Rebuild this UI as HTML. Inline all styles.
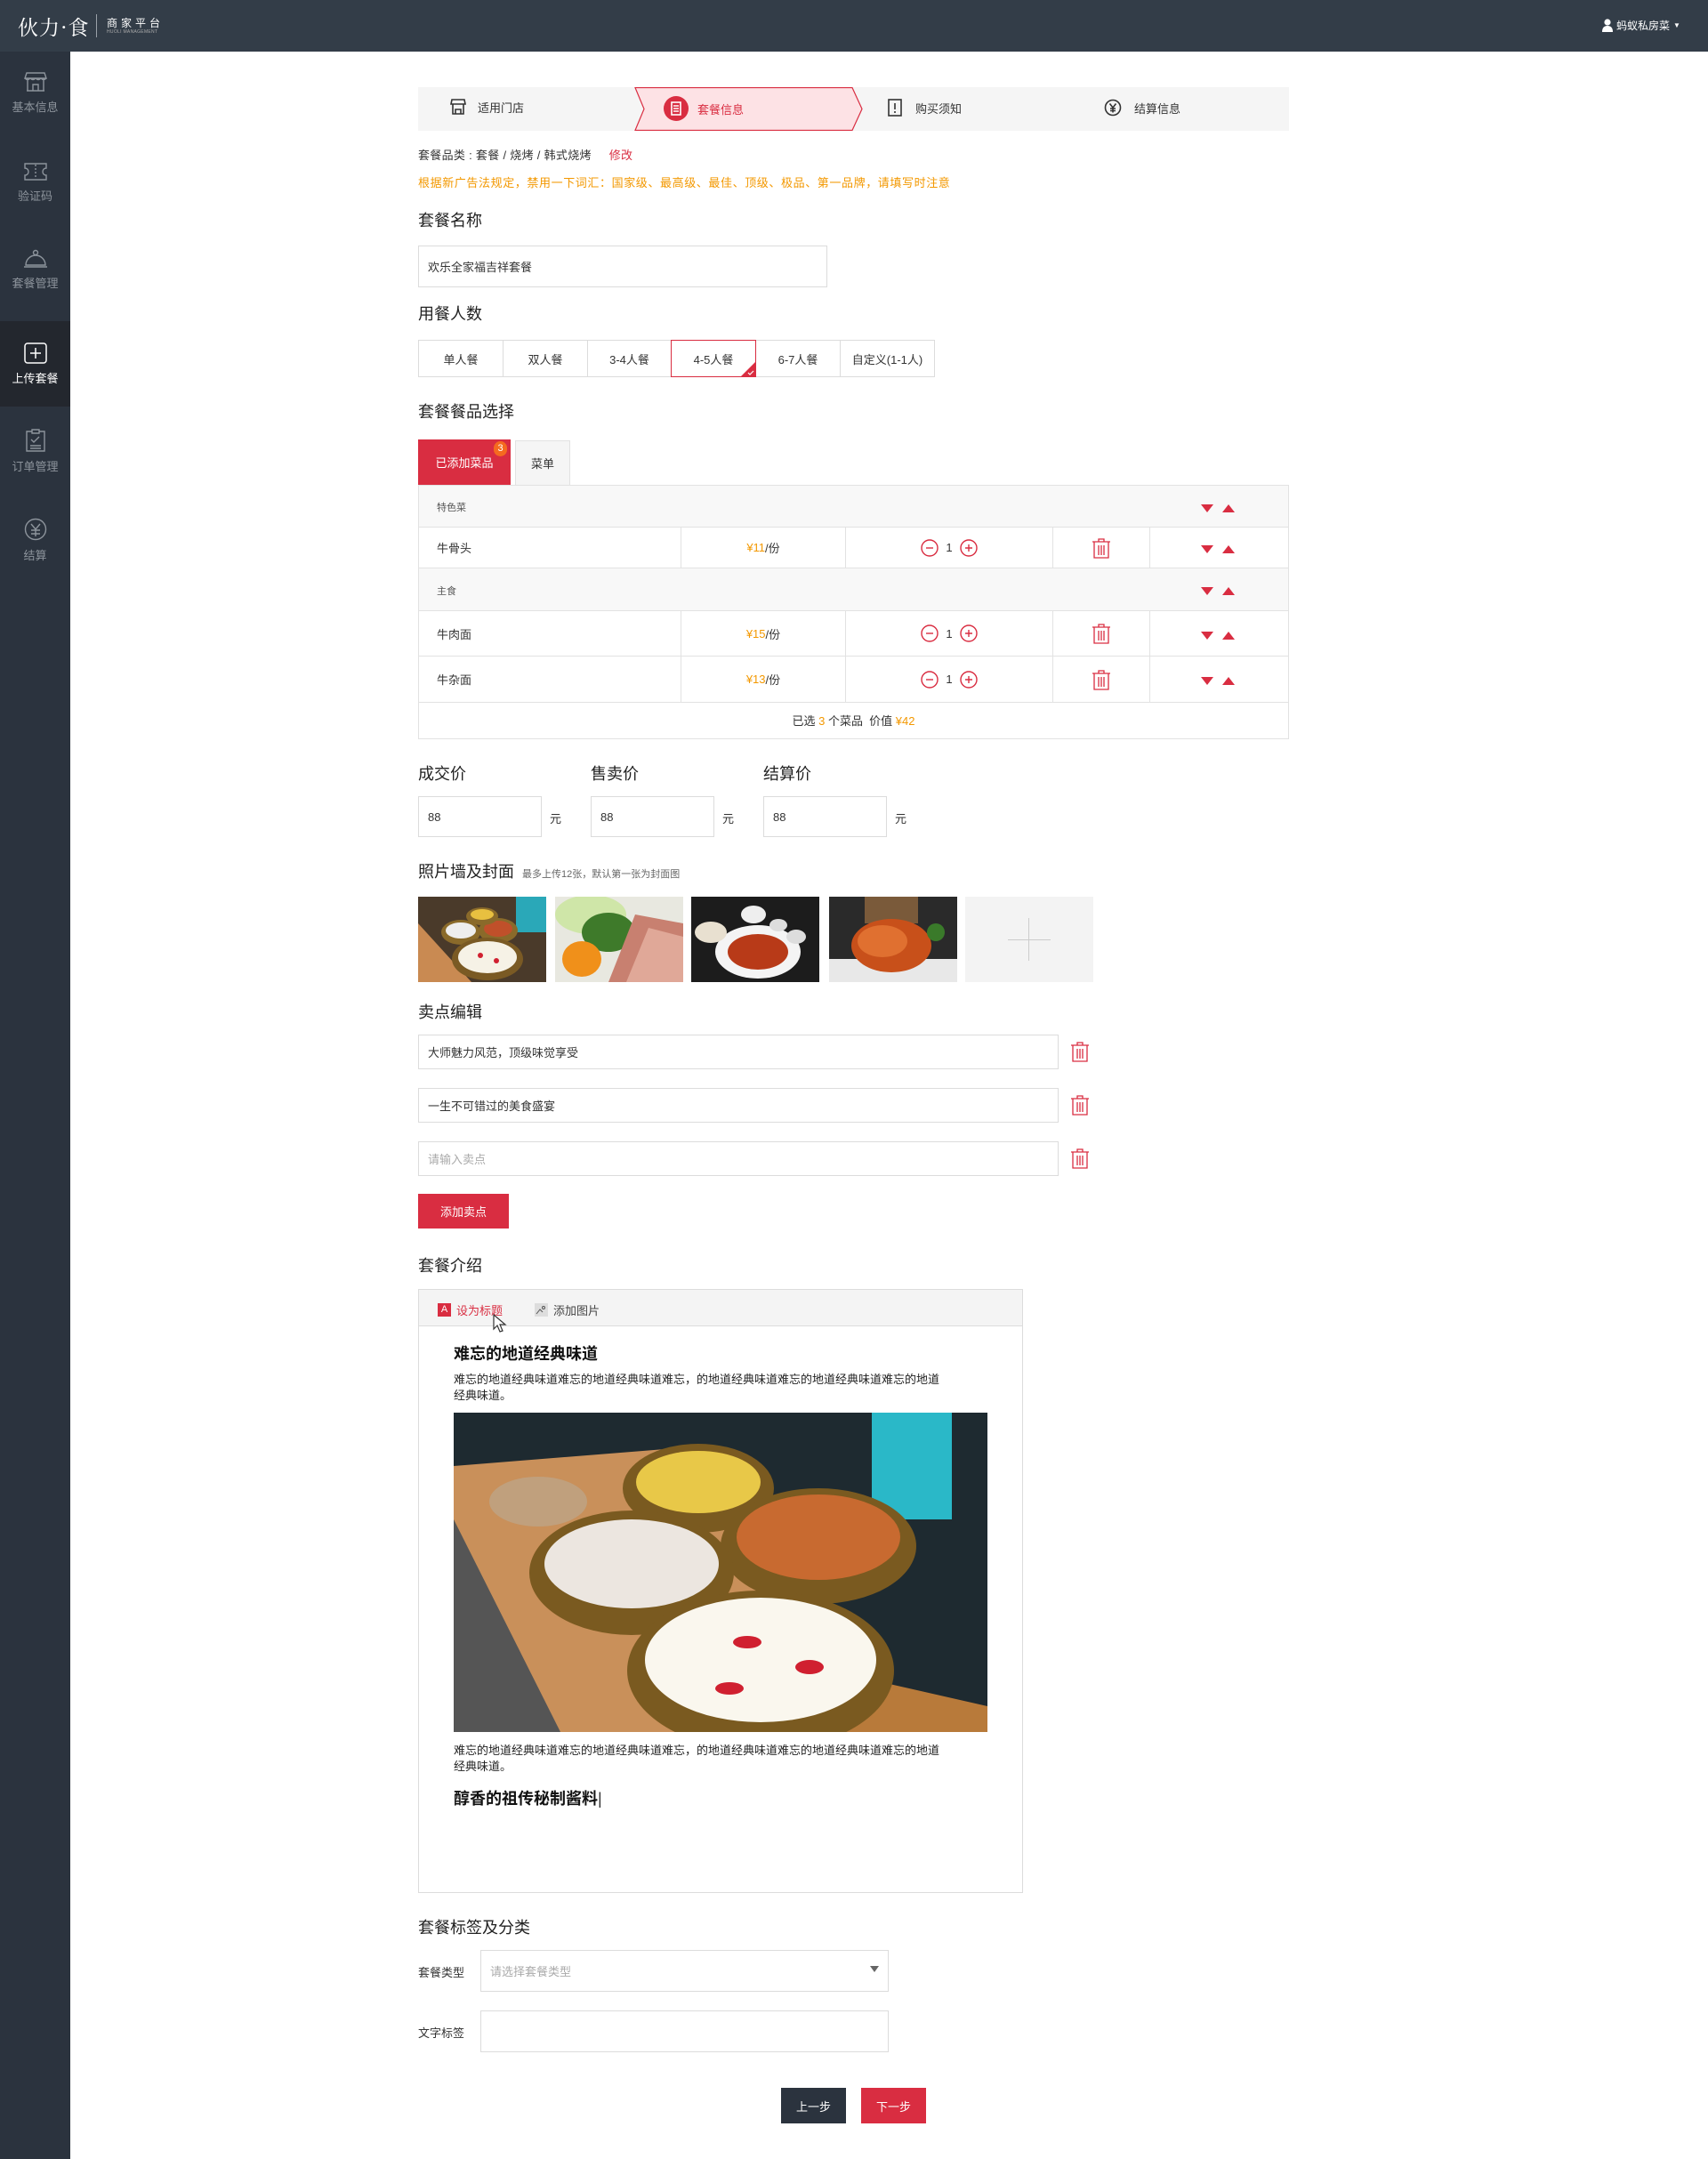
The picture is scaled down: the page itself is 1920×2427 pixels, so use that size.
<!DOCTYPE html>
<html><head><meta charset="utf-8">
<style>
*{margin:0;padding:0;box-sizing:border-box}
body{width:1920px;height:2427px;position:relative;background:#fff;font-family:"Liberation Sans","Noto Sans CJK SC",sans-serif;color:#333;font-size:13px;overflow:hidden}
.a{position:absolute}
.hdr{left:0;top:0;width:1920px;height:58px;background:#333d48}
.side{left:0;top:58px;width:79px;height:2369px;background:#2b333e}
.nav{position:absolute;left:0;width:79px;text-align:center;color:#8d949c;font-size:13px}
.nav svg{display:block;margin:0 auto 6px}
.h{position:absolute;font-size:18px;color:#222;line-height:20px}
.inp{position:absolute;border:1px solid #dcdcdc;background:#fff;font-size:13px;color:#333;padding-left:10px;display:flex;align-items:center}
.red{color:#d92d41}.org{color:#f39800}
.row{position:absolute;left:470px;width:979px;border-bottom:1px solid #e2e2e2}
.cell{position:absolute;top:0;height:100%;display:flex;align-items:center;justify-content:center;border-right:1px solid #e2e2e2}
.tri{display:inline-block;width:0;height:0;border-left:7px solid transparent;border-right:7px solid transparent}
.dn{border-top:9px solid #d92d41}.up{border-bottom:9px solid #d92d41}
.tbtn{position:absolute;top:382px;height:42px;border:1px solid #dcdcdc;display:flex;align-items:center;justify-content:center;font-size:13px;color:#333;background:#fff}
</style></head><body>
<div class="a hdr">
 <div class="a" style="left:20px;top:13px;color:#fff;font-family:'Noto Serif CJK SC',serif;font-size:23px;letter-spacing:1px">伙力·食</div>
 <div class="a" style="left:108px;top:16px;width:1px;height:26px;background:#9aa0a8"></div>
 <div class="a" style="left:120px;top:17px;color:#fff;font-size:12px;letter-spacing:4px">商家平台</div>
 <div class="a" style="left:120px;top:33px;color:#aaa;font-size:5px;letter-spacing:.3px">HUOLI MANAGEMENT</div>
 <div class="a" style="left:1801px;top:20px;color:#fff;font-size:12px;display:flex;align-items:center">
  <svg width="12" height="15" viewBox="0 0 12 15"><circle cx="6" cy="4" r="3.6" fill="#fff"/><path d="M0 15 Q0 8 6 8 Q12 8 12 15Z" fill="#fff"/></svg>
  <span style="margin-left:4px">蚂蚁私房菜</span><span style="margin-left:4px;font-size:8px">▼</span></div>
</div>
<div class="a side">
 <div class="nav" style="top:22px"><svg width="26" height="24" viewBox="0 0 26 24" fill="none" stroke="#8d949c" stroke-width="1.4"><path d="M3 2h20l2 6H1zM1 8q3 3 6 0q3 3 6 0q3 3 6 0q3 3 6 0M4 10v12h18V10M3 22h20M10 22v-7h6v7"/></svg>基本信息</div>
 <div class="nav" style="top:124px"><svg width="26" height="22" viewBox="0 0 26 22" fill="none" stroke="#8d949c" stroke-width="1.4"><path d="M1 2h24v5a4 4 0 0 0 0 8v5H1v-5a4 4 0 0 0 0-8z"/><path d="M13 3v16" stroke-dasharray="2 2"/></svg>验证码</div>
 <div class="nav" style="top:222px"><svg width="28" height="22" viewBox="0 0 28 22" fill="none" stroke="#8d949c" stroke-width="1.4"><circle cx="14" cy="4" r="2.5"/><path d="M3 18a11 11 0 0 1 22 0zM1 20h26"/></svg>套餐管理</div>
 <div class="a" style="left:0;top:303px;width:79px;height:96px;background:#23272e"></div>
 <div class="nav" style="top:327px;color:#fff"><svg width="26" height="24" viewBox="0 0 26 24" fill="none" stroke="#fff" stroke-width="1.5"><rect x="1" y="1" width="24" height="22" rx="3"/><path d="M13 6v12M7 12h12"/></svg>上传套餐</div>
 <div class="nav" style="top:424px"><svg width="24" height="26" viewBox="0 0 24 26" fill="none" stroke="#8d949c" stroke-width="1.4"><path d="M8 3H2v22h20V3h-6M8 1h8v4H8zM7 12l3 3 6-6M6 19h12M6 22h12"/></svg>订单管理</div>
 <div class="nav" style="top:524px"><svg width="26" height="26" viewBox="0 0 26 26" fill="none" stroke="#8d949c" stroke-width="1.4"><circle cx="13" cy="13" r="11.5"/><path d="M8 7l5 6 5-6M13 13v8M8 14h10M8 18h10"/></svg>结算</div>
</div>

<div class="a" style="left:470px;top:98px;width:979px;height:49px;background:#f5f5f5"></div>
<svg class="a" style="left:712px;top:98px" width="260" height="49" viewBox="0 0 260 49"><path d="M2 0.5H246L257 24.5L246 48.5H2L12 24.5Z" fill="#fde2e5" stroke="#d92d41" stroke-width="1.2"/></svg>
<div class="a" style="left:505px;top:110px;display:flex;align-items:center;font-size:13px;color:#333">
 <svg width="20" height="20" viewBox="0 0 20 20" fill="none" stroke="#333" stroke-width="1.6"><path d="M3 2h14l1 5H2zM4 7v11h12V7M7 18v-5h6v5"/></svg><span style="margin-left:12px">适用门店</span></div>
<div class="a" style="left:746px;top:108px;display:flex;align-items:center;font-size:13px;color:#d92d41">
 <svg width="28" height="28" viewBox="0 0 28 28"><circle cx="14" cy="14" r="14" fill="#d92d41"/><rect x="9" y="7" width="10" height="14" fill="none" stroke="#fff" stroke-width="1.6"/><path d="M11 11h6M11 14h6M11 17h6" stroke="#fff" stroke-width="1.4"/></svg><span style="margin-left:10px">套餐信息</span></div>
<div class="a" style="left:997px;top:111px;display:flex;align-items:center;font-size:13px;color:#333">
 <svg width="18" height="20" viewBox="0 0 18 20" fill="none" stroke="#333" stroke-width="1.6"><rect x="2" y="1" width="14" height="18"/><path d="M9 5v7M9 14v2"/></svg><span style="margin-left:14px">购买须知</span></div>
<div class="a" style="left:1241px;top:111px;display:flex;align-items:center;font-size:13px;color:#333">
 <svg width="20" height="20" viewBox="0 0 20 20" fill="none" stroke="#333" stroke-width="1.6"><circle cx="10" cy="10" r="8.5"/><path d="M6.5 5.5l3.5 4.5 3.5-4.5M10 10v5.5M7 11h6M7 13.5h6"/></svg><span style="margin-left:14px">结算信息</span></div>

<div class="a" style="left:470px;top:164px;font-size:13px;color:#333;letter-spacing:.3px">套餐品类 : 套餐 / 烧烤 / 韩式烧烤 <span class="red" style="margin-left:16px">修改</span></div>
<div class="a org" style="left:470px;top:195px;font-size:13px;letter-spacing:.6px">根据新广告法规定，禁用一下词汇：国家级、最高级、最佳、顶级、极品、第一品牌，请填写时注意</div>

<div class="h" style="left:470px;top:238px">套餐名称</div>
<div class="inp" style="left:470px;top:276px;width:460px;height:47px">欢乐全家福吉祥套餐</div>

<div class="h" style="left:470px;top:343px">用餐人数</div>
<div class="tbtn" style="left:470px;width:96px">单人餐</div>
<div class="tbtn" style="left:565px;width:96px">双人餐</div>
<div class="tbtn" style="left:660px;width:95px">3-4人餐</div>
<div class="tbtn" style="left:849px;width:96px">6-7人餐</div>
<div class="tbtn" style="left:944px;width:107px">自定义(1-1人)</div>
<div class="tbtn" style="left:754px;width:96px;border-color:#d92d41;z-index:2">4-5人餐
 <svg class="a" style="right:-1px;bottom:-1px" width="18" height="18" viewBox="0 0 18 18"><path d="M18 0V18H0Z" fill="#d92d41"/><path d="M9 13l2 2 4-4" stroke="#fff" stroke-width="1.2" fill="none"/></svg></div>

<div class="h" style="left:470px;top:453px">套餐餐品选择</div>
<div class="a" style="left:470px;top:494px;width:104px;height:51px;background:#d92d41;color:#fff;display:flex;align-items:center;justify-content:center;font-size:13px">已添加菜品</div>
<div class="a" style="left:555px;top:496px;width:15px;height:17px;border-radius:8px;background:#f56a1f;color:#fff;font-size:11px;text-align:center;line-height:17px">3</div>
<div class="a" style="left:579px;top:495px;width:62px;height:50px;background:#f5f5f5;border:1px solid #e2e2e2;border-bottom:none;display:flex;align-items:center;justify-content:center;font-size:13px">菜单</div>

<div class="a" style="left:470px;top:545px;width:979px;height:286px;border:1px solid #e2e2e2"></div>
<div class="row" style="top:545px;height:48px;background:#f8f8f8;border-top:1px solid #e2e2e2;border-left:1px solid #e2e2e2;border-right:1px solid #e2e2e2">
 <div class="a" style="left:20px;top:16px;font-size:11px;color:#555">特色菜</div>
 <div class="a" style="left:879px;top:18px"><span class="tri dn"></span><span class="tri up" style="margin-left:10px"></span></div></div>
<div class="row" style="top:593px;height:46px;border-left:1px solid #e2e2e2;border-right:1px solid #e2e2e2">
 <div class="cell" style="left:0;width:295px;justify-content:flex-start;padding-left:20px">牛骨头</div>
 <div class="cell" style="left:295px;width:185px"><span class="org">¥11</span>/份</div>
 <div class="cell" style="left:480px;width:233px"><svg width="20" height="20" viewBox="0 0 20 20" fill="none" stroke="#d92d41" stroke-width="1.4"><circle cx="10" cy="10" r="9"/><path d="M6 10h8"/></svg><span style="margin:0 8px">1</span><svg width="20" height="20" viewBox="0 0 20 20" fill="none" stroke="#d92d41" stroke-width="1.4"><circle cx="10" cy="10" r="9"/><path d="M6 10h8M10 6v8"/></svg></div>
 <div class="cell" style="left:713px;width:109px"><svg width="22" height="24" viewBox="0 0 22 24" fill="none" stroke="#d92d41" stroke-width="1.3"><path d="M1 5h20M8 5V2h6v3M3 5v18h16V5M8 9v11M11 9v11M14 9v11"/></svg></div>
 <div class="a" style="left:879px;top:17px"><span class="tri dn"></span><span class="tri up" style="margin-left:10px"></span></div></div>
<div class="row" style="top:639px;height:48px;background:#f8f8f8;border-left:1px solid #e2e2e2;border-right:1px solid #e2e2e2">
 <div class="a" style="left:20px;top:17px;font-size:11px;color:#555">主食</div>
 <div class="a" style="left:879px;top:18px"><span class="tri dn"></span><span class="tri up" style="margin-left:10px"></span></div></div>
<div class="row" style="top:687px;height:51px;border-left:1px solid #e2e2e2;border-right:1px solid #e2e2e2">
 <div class="cell" style="left:0;width:295px;justify-content:flex-start;padding-left:20px">牛肉面</div>
 <div class="cell" style="left:295px;width:185px"><span class="org">¥15</span>/份</div>
 <div class="cell" style="left:480px;width:233px"><svg width="20" height="20" viewBox="0 0 20 20" fill="none" stroke="#d92d41" stroke-width="1.4"><circle cx="10" cy="10" r="9"/><path d="M6 10h8"/></svg><span style="margin:0 8px">1</span><svg width="20" height="20" viewBox="0 0 20 20" fill="none" stroke="#d92d41" stroke-width="1.4"><circle cx="10" cy="10" r="9"/><path d="M6 10h8M10 6v8"/></svg></div>
 <div class="cell" style="left:713px;width:109px"><svg width="22" height="24" viewBox="0 0 22 24" fill="none" stroke="#d92d41" stroke-width="1.3"><path d="M1 5h20M8 5V2h6v3M3 5v18h16V5M8 9v11M11 9v11M14 9v11"/></svg></div>
 <div class="a" style="left:879px;top:20px"><span class="tri dn"></span><span class="tri up" style="margin-left:10px"></span></div></div>
<div class="row" style="top:738px;height:52px;border-left:1px solid #e2e2e2;border-right:1px solid #e2e2e2">
 <div class="cell" style="left:0;width:295px;justify-content:flex-start;padding-left:20px">牛杂面</div>
 <div class="cell" style="left:295px;width:185px"><span class="org">¥13</span>/份</div>
 <div class="cell" style="left:480px;width:233px"><svg width="20" height="20" viewBox="0 0 20 20" fill="none" stroke="#d92d41" stroke-width="1.4"><circle cx="10" cy="10" r="9"/><path d="M6 10h8"/></svg><span style="margin:0 8px">1</span><svg width="20" height="20" viewBox="0 0 20 20" fill="none" stroke="#d92d41" stroke-width="1.4"><circle cx="10" cy="10" r="9"/><path d="M6 10h8M10 6v8"/></svg></div>
 <div class="cell" style="left:713px;width:109px"><svg width="22" height="24" viewBox="0 0 22 24" fill="none" stroke="#d92d41" stroke-width="1.3"><path d="M1 5h20M8 5V2h6v3M3 5v18h16V5M8 9v11M11 9v11M14 9v11"/></svg></div>
 <div class="a" style="left:879px;top:20px"><span class="tri dn"></span><span class="tri up" style="margin-left:10px"></span></div></div>
<div class="a" style="left:470px;top:800px;width:979px;text-align:center;font-size:13px">已选 <span class="org">3</span> 个菜品&nbsp;&nbsp;价值 <span class="org">¥42</span></div>

<div class="h" style="left:470px;top:860px">成交价</div>
<div class="h" style="left:664px;top:860px">售卖价</div>
<div class="h" style="left:858px;top:860px">结算价</div>
<div class="inp" style="left:470px;top:895px;width:139px;height:46px">88</div><div class="a" style="left:618px;top:910px">元</div>
<div class="inp" style="left:664px;top:895px;width:139px;height:46px">88</div><div class="a" style="left:812px;top:910px">元</div>
<div class="inp" style="left:858px;top:895px;width:139px;height:46px">88</div><div class="a" style="left:1006px;top:910px">元</div>

<div class="h" style="left:470px;top:970px">照片墙及封面 <span style="font-size:11px;color:#666;margin-left:4px">最多上传12张，默认第一张为封面图</span></div>
<svg class="a" style="left:470px;top:1008px" width="144" height="96" viewBox="0 0 144 96"><rect width="144" height="96" fill="#4a3a2a"/><path d="M0 30L60 96H0z" fill="#c98a52"/><rect x="110" y="0" width="34" height="40" fill="#2aa8b8"/><ellipse cx="48" cy="40" rx="22" ry="14" fill="#8a6a2a"/><ellipse cx="48" cy="38" rx="17" ry="9" fill="#eee"/><ellipse cx="90" cy="38" rx="22" ry="14" fill="#8a6a2a"/><ellipse cx="90" cy="36" rx="16" ry="9" fill="#c0502a"/><ellipse cx="72" cy="22" rx="18" ry="10" fill="#8a6a2a"/><ellipse cx="72" cy="20" rx="13" ry="6" fill="#e8c040"/><ellipse cx="78" cy="70" rx="40" ry="24" fill="#7a5a24"/><ellipse cx="78" cy="68" rx="33" ry="18" fill="#f6f2e6"/><circle cx="70" cy="66" r="3" fill="#d02030"/><circle cx="88" cy="72" r="3" fill="#d02030"/></svg>
<svg class="a" style="left:624px;top:1008px" width="144" height="96" viewBox="0 0 144 96"><rect width="144" height="96" fill="#e8e8e0"/><ellipse cx="40" cy="20" rx="40" ry="22" fill="#cfe6a8"/><ellipse cx="60" cy="40" rx="30" ry="22" fill="#3e7a2a"/><ellipse cx="30" cy="70" rx="22" ry="20" fill="#f0901a"/><path d="M60 96L90 20L144 30V96z" fill="#c88070"/><path d="M80 96L105 35L144 45V96z" fill="#e0a898"/></svg>
<svg class="a" style="left:777px;top:1008px" width="144" height="96" viewBox="0 0 144 96"><rect width="144" height="96" fill="#1c1c1c"/><ellipse cx="75" cy="62" rx="48" ry="30" fill="#f4f4f4"/><ellipse cx="75" cy="62" rx="34" ry="20" fill="#b83a18"/><ellipse cx="22" cy="40" rx="18" ry="12" fill="#e8e0d0"/><ellipse cx="70" cy="20" rx="14" ry="10" fill="#eee"/><ellipse cx="98" cy="32" rx="10" ry="7" fill="#ddd"/><ellipse cx="118" cy="45" rx="11" ry="8" fill="#ddd"/></svg>
<svg class="a" style="left:932px;top:1008px" width="144" height="96" viewBox="0 0 144 96"><rect width="144" height="96" fill="#2a2a2a"/><rect x="40" y="0" width="60" height="30" fill="#7a5a3a"/><rect x="0" y="70" width="144" height="26" fill="#e8e8e8"/><ellipse cx="70" cy="55" rx="45" ry="30" fill="#c8501a"/><ellipse cx="60" cy="50" rx="28" ry="18" fill="#e07030"/><circle cx="120" cy="40" r="10" fill="#3a7a2a"/></svg>
<div class="a" style="left:1085px;top:1008px;width:144px;height:96px;background:#f3f3f3"><div class="a" style="left:71px;top:24px;width:1px;height:48px;background:#ccc"></div><div class="a" style="left:48px;top:48px;width:48px;height:1px;background:#ccc"></div></div>

<div class="h" style="left:470px;top:1128px">卖点编辑</div>
<div class="inp" style="left:470px;top:1163px;width:720px;height:39px">大师魅力风范，顶级味觉享受</div>
<div class="inp" style="left:470px;top:1223px;width:720px;height:39px">一生不可错过的美食盛宴</div>
<div class="inp" style="left:470px;top:1283px;width:720px;height:39px;color:#aaa">请输入卖点</div>
<svg class="a" style="left:1203px;top:1170px" width="22" height="24" viewBox="0 0 22 24" fill="none" stroke="#d92d41" stroke-width="1.3"><path d="M1 5h20M8 5V2h6v3M3 5v18h16V5M8 9v11M11 9v11M14 9v11"/></svg>
<svg class="a" style="left:1203px;top:1230px" width="22" height="24" viewBox="0 0 22 24" fill="none" stroke="#d92d41" stroke-width="1.3"><path d="M1 5h20M8 5V2h6v3M3 5v18h16V5M8 9v11M11 9v11M14 9v11"/></svg>
<svg class="a" style="left:1203px;top:1290px" width="22" height="24" viewBox="0 0 22 24" fill="none" stroke="#d92d41" stroke-width="1.3"><path d="M1 5h20M8 5V2h6v3M3 5v18h16V5M8 9v11M11 9v11M14 9v11"/></svg>
<div class="a" style="left:470px;top:1342px;width:102px;height:39px;background:#d92d41;color:#fff;display:flex;align-items:center;justify-content:center;font-size:13px">添加卖点</div>

<div class="h" style="left:470px;top:1413px">套餐介绍</div>
<div class="a" style="left:470px;top:1449px;width:680px;height:679px;border:1px solid #dcdcdc"></div>
<div class="a" style="left:471px;top:1450px;width:678px;height:41px;background:#f4f4f4;border-bottom:1px solid #dcdcdc"></div>
<div class="a" style="left:492px;top:1463px;display:flex;align-items:center;font-size:13px">
 <span style="display:inline-block;width:15px;height:15px;background:#d92d41;color:#fff;font-size:11px;text-align:center;line-height:15px">A</span><span class="red" style="margin-left:6px">设为标题</span>
 <span style="display:inline-block;width:15px;height:15px;background:#ddd;margin-left:36px;position:relative"><svg width="15" height="15" viewBox="0 0 15 15" fill="none" stroke="#555"><path d="M2 12l4-5 3 3"/><circle cx="10" cy="5" r="1.5"/></svg></span><span style="margin-left:6px;color:#444">添加图片</span></div>
<svg class="a" style="left:554px;top:1477px" width="18" height="22" viewBox="0 0 18 22"><path d="M1 1L1 17L5 13L8 20L11 19L8 12L14 12Z" fill="#fff" stroke="#333" stroke-width="1.2"/></svg>
<div class="a" style="left:510px;top:1508px;font-size:18px;font-weight:bold;color:#111">难忘的地道经典味道</div>
<div class="a" style="left:510px;top:1542px;width:600px;font-size:13px;line-height:18px;color:#222">难忘的地道经典味道难忘的地道经典味道难忘，的地道经典味道难忘的地道经典味道难忘的地道<br>经典味道。</div>
<svg class="a" style="left:510px;top:1588px" width="600" height="359" viewBox="0 0 600 359">
 <rect width="600" height="359" fill="#1e2a30"/>
 <rect x="470" y="0" width="90" height="120" fill="#2ab8c8"/>
 <path d="M0 60L250 40L440 359H0z" fill="#c9905a"/>
 <path d="M0 120L120 359H0z" fill="#555"/>
 <path d="M380 280L600 330V359H380z" fill="#b87a3a"/>
 <ellipse cx="95" cy="100" rx="55" ry="28" fill="#b8b0a0" opacity=".5"/>
 <ellipse cx="275" cy="85" rx="85" ry="50" fill="#7a5a20"/><ellipse cx="275" cy="78" rx="70" ry="35" fill="#e8c848"/>
 <ellipse cx="410" cy="150" rx="110" ry="65" fill="#7a5a20"/><ellipse cx="410" cy="140" rx="92" ry="48" fill="#c86a30"/>
 <ellipse cx="200" cy="180" rx="115" ry="70" fill="#7a5a20"/><ellipse cx="200" cy="170" rx="98" ry="50" fill="#ece6e0"/>
 <ellipse cx="345" cy="290" rx="150" ry="90" fill="#7a5a20"/><ellipse cx="345" cy="278" rx="130" ry="70" fill="#faf7ee"/>
 <ellipse cx="330" cy="258" rx="16" ry="7" fill="#d02030"/><ellipse cx="400" cy="286" rx="16" ry="8" fill="#d02030"/><ellipse cx="310" cy="310" rx="16" ry="7" fill="#d02030"/>
</svg>
<div class="a" style="left:510px;top:1959px;width:600px;font-size:13px;line-height:18px;color:#222">难忘的地道经典味道难忘的地道经典味道难忘，的地道经典味道难忘的地道经典味道难忘的地道<br>经典味道。</div>
<div class="a" style="left:510px;top:2008px;font-size:18px;font-weight:bold;color:#111">醇香的祖传秘制酱料<span style="font-weight:normal;color:#333">|</span></div>

<div class="h" style="left:470px;top:2157px">套餐标签及分类</div>
<div class="a" style="left:470px;top:2207px;font-size:13px">套餐类型</div>
<div class="inp" style="left:540px;top:2192px;width:459px;height:47px;color:#aaa">请选择套餐类型<span class="a" style="right:10px;top:17px;width:0;height:0;border-left:5px solid transparent;border-right:5px solid transparent;border-top:7px solid #666"></span></div>
<div class="a" style="left:470px;top:2275px;font-size:13px">文字标签</div>
<div class="inp" style="left:540px;top:2260px;width:459px;height:47px"></div>
<div class="a" style="left:878px;top:2347px;width:73px;height:40px;background:#2b333e;color:#fff;display:flex;align-items:center;justify-content:center;font-size:13px">上一步</div>
<div class="a" style="left:968px;top:2347px;width:73px;height:40px;background:#d92d41;color:#fff;display:flex;align-items:center;justify-content:center;font-size:13px">下一步</div>
</body></html>
